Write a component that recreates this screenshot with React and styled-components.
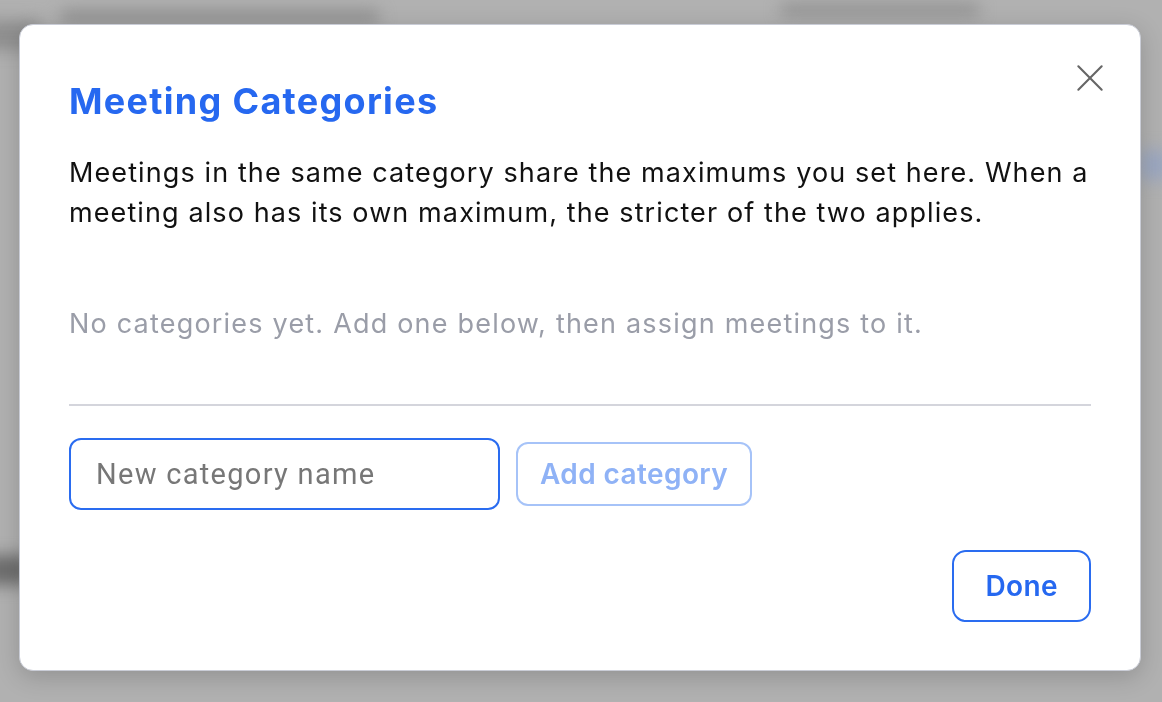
import React from 'react';
import styled, { createGlobalStyle } from 'styled-components';

const GlobalStyle = createGlobalStyle`
  html, body { margin: 0; padding: 0; }
  body {
    font-family: Inter, "Noto Sans", sans-serif;
    background: #b1b1b1;
    overflow: hidden;
  }
`;

const Screen = styled.div`
  position: relative;
  width: 1162px;
  height: 702px;
  overflow: hidden;
  background: #b1b1b1;
`;

const Backdrop = styled.div`
  position: absolute;
  inset: 0;
  filter: blur(8px);
  & > span {
    position: absolute;
    display: block;
    background: #8f8f8f;
    border-radius: 6px;
  }
`;

const Dialog = styled.div`
  position: absolute;
  left: 19px;
  top: 24px;
  width: 1122px;
  height: 647px;
  box-sizing: border-box;
  background: #fff;
  border: 1px solid #c9ccd6;
  border-radius: 14px;
  box-shadow: 0 6px 24px rgba(0, 0, 0, 0.18);
  padding: 54px 49px 48px 49px;
  display: flex;
  flex-direction: column;
`;

const Header = styled.div`
  display: flex;
  justify-content: space-between;
  align-items: flex-start;
`;

const Title = styled.h2`
  margin: 0;
  font-size: 36px;
  font-weight: 700;
  color: #2668f0;
  letter-spacing: 1.3px;
  line-height: 44px;
`;

const CloseButton = styled.button`
  border: none;
  background: none;
  padding: 0;
  margin: -17px -15px 0 0;
  width: 32px;
  height: 32px;
  display: flex;
  align-items: center;
  justify-content: center;
  cursor: pointer;
`;

const Description = styled.p`
  margin: 30px -6px 0 0;
  font-size: 27px;
  letter-spacing: 1.1px;
  line-height: 40px;
  color: #111;
`;

const Empty = styled.p`
  margin: 71px 0 0;
  font-size: 27px;
  letter-spacing: 1.2px;
  line-height: 40px;
  color: #9a9da8;
`;

const Divider = styled.hr`
  margin: 60px 0 0;
  border: none;
  border-top: 2px solid #d4d5dc;
`;

const AddRow = styled.div`
  display: flex;
  align-items: center;
  gap: 16px;
  margin-top: 32px;
`;

const NameInput = styled.input`
  width: 431px;
  height: 72px;
  box-sizing: border-box;
  border: 2px solid #2a6cf0;
  border-radius: 12px;
  padding: 0 25px;
  font-family: Roboto, "Noto Sans", sans-serif;
  font-size: 29px;
  letter-spacing: 1.3px;
  color: #222;
  outline: none;
  caret-color: #111;
  &::placeholder { color: #777; }
`;

const OutlineButton = styled.button`
  height: ${p => p.$tall ? '72px' : '64px'};
  box-sizing: border-box;
  padding: 0 ${p => p.$tall ? '31px' : '22px'};
  border: 2px solid ${p => p.$muted ? '#a6c3f8' : '#2a6cf0'};
  border-radius: ${p => p.$tall ? '14px' : '12px'};
  background: #fff;
  color: ${p => p.$muted ? '#8fb2f6' : '#2668f0'};
  font-family: Inter, "Noto Sans", sans-serif;
  font-size: 28px;
  letter-spacing: 0.4px;
  font-weight: 600;
  cursor: pointer;
`;

const Footer = styled.div`
  margin-top: auto;
  display: flex;
  justify-content: flex-end;
`;

export default function App() {
  return (
    <Screen>
      <GlobalStyle />
      <Backdrop>
        <span style={{ left: -20, top: 20, width: 60, height: 30 }} />
        <span style={{ left: 60, top: 10, width: 320, height: 14 }} />
        <span style={{ left: 780, top: 4, width: 200, height: 12 }} />
        <span style={{ left: -20, top: 555, width: 50, height: 30, background: '#6d6d6d' }} />
        <span style={{ left: 1140, top: 150, width: 30, height: 30, background: '#9aa6c0' }} />
      </Backdrop>
      <Dialog role="dialog" aria-labelledby="mc-title">
        <Header>
          <Title id="mc-title">Meeting Categories</Title>
          <CloseButton aria-label="Close">
            <svg width="28" height="28" viewBox="0 0 24 24" fill="none" stroke="#666" strokeWidth="1.8" strokeLinecap="round">
              <path d="M2 2 L22 22 M22 2 L2 22" />
            </svg>
          </CloseButton>
        </Header>
        <Description>
          Meetings in the same category share the maximums you set here. When a meeting also has its own maximum, the stricter of the two applies.
        </Description>
        <Empty>No categories yet. Add one below, then assign meetings to it.</Empty>
        <Divider />
        <AddRow>
          <NameInput placeholder="New category name" autoFocus />
          <OutlineButton $muted disabled>Add category</OutlineButton>
        </AddRow>
        <Footer>
          <OutlineButton $tall>Done</OutlineButton>
        </Footer>
      </Dialog>
    </Screen>
  );
}
